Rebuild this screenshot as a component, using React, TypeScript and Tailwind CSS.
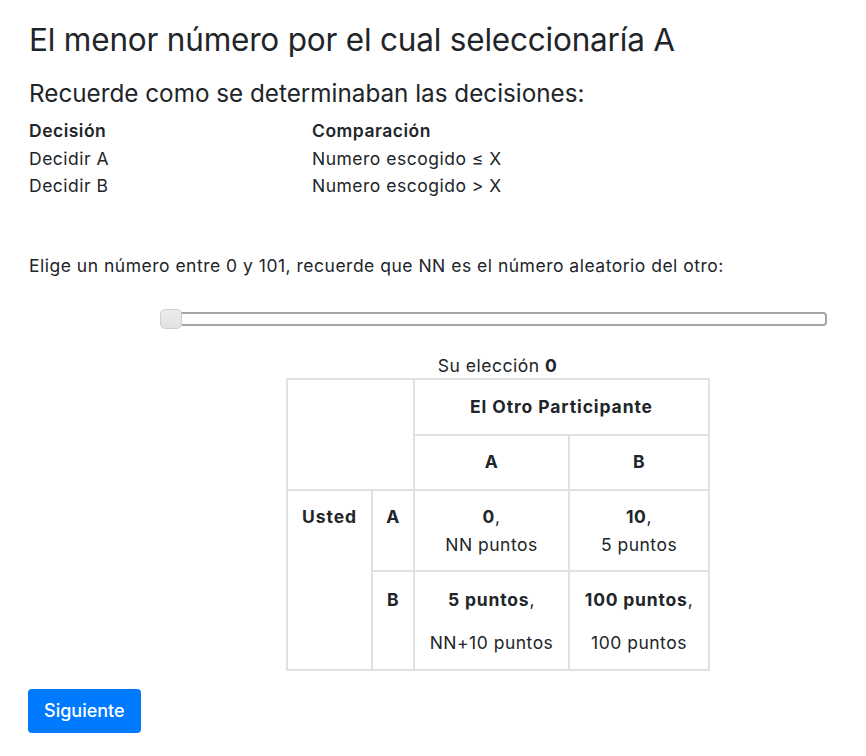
export default function App() {
  const font = { fontFamily: 'Inter, "Noto Sans", sans-serif' }
  return (
    <div className="min-h-screen bg-white text-[#212529]" style={font}>
      <div className="px-[29px] pt-[19px]">
        <h1 className="text-[31.5px] leading-[42px] font-normal tracking-[-0.2px]">
          El menor número por el cual seleccionaría A
        </h1>
        <h3 className="mt-[18px] text-[24.25px] leading-[30px] font-normal">
          Recuerde como se determinaban las decisiones:
        </h3>

        {/* decisiones */}
        <div className="mt-[8px] grid grid-cols-[283px_1fr] text-[17.5px] leading-[27.5px] tracking-[0.5px]">
          <div className="font-semibold">Decisión</div>
          <div className="font-semibold">Comparación</div>
          <div>Decidir A</div>
          <div>Numero escogido ≤ X</div>
          <div>Decidir B</div>
          <div>Numero escogido &gt; X</div>
        </div>

        <p className="mt-[54px] text-[17.5px] leading-[24px] tracking-[0.5px]">
          Elige un número entre 0 y 101, recuerde que NN es el número aleatorio del otro:
        </p>

        {/* slider */}
        <div className="mt-[31px] ml-[131px] mr-[10px] relative h-[20px] flex items-center">
          <div className="w-full h-[14px] rounded-[4px] border-2 border-[#a5a5a5] bg-white" />
          <div className="absolute left-0 top-0 w-[22px] h-[20px] rounded-[5px] border border-[#cfcfcf] bg-gradient-to-b from-[#ececec] to-[#e2e2e2]" />
        </div>

        {/* matriz */}
        <div className="mt-[25px] ml-[257px] text-[17.5px] tracking-[0.5px]">
          <div className="w-[423px] text-center leading-[24px]">
            Su elección <b>0</b>
          </div>
          <table className="border-collapse leading-[26px] text-center">
            <tbody>
              <tr className="h-[56px]">
                <td colSpan={2} rowSpan={2} className="border-2 border-[#dee2e6] w-[127px]"></td>
                <th colSpan={2} className="border-2 border-[#dee2e6] font-bold align-middle tracking-[0.9px]">
                  El Otro Participante
                </th>
              </tr>
              <tr className="h-[55px]">
                <th className="border-2 border-[#dee2e6] w-[155px] font-bold align-middle">A</th>
                <th className="border-2 border-[#dee2e6] w-[140px] font-bold align-middle">B</th>
              </tr>
              <tr className="h-[81px]">
                <th rowSpan={2} className="border-2 border-[#dee2e6] w-[85px] align-top pt-[13px] font-bold tracking-[0.9px]">
                  Usted
                </th>
                <th className="border-2 border-[#dee2e6] w-[42px] align-top pt-[13px] font-bold">A</th>
                <td className="border-2 border-[#dee2e6] align-top pt-[12px] leading-[28px]">
                  <b>0</b>,
                  <br />
                  NN puntos
                </td>
                <td className="border-2 border-[#dee2e6] align-top pt-[12px] leading-[28px]">
                  <b>10</b>,
                  <br />
                  5 puntos
                </td>
              </tr>
              <tr className="h-[99px]">
                <th className="border-2 border-[#dee2e6] align-top pt-[15px] font-bold">B</th>
                <td className="border-2 border-[#dee2e6] align-top pt-[15px]">
                  <b className="tracking-[0.8px]">5 puntos</b>,
                  <div className="mt-[17px]">NN+10 puntos</div>
                </td>
                <td className="border-2 border-[#dee2e6] align-top pt-[15px]">
                  <b className="tracking-[0.8px]">100 puntos</b>,
                  <div className="mt-[17px]">100 puntos</div>
                </td>
              </tr>
            </tbody>
          </table>
        </div>

        <button className="mt-[18px] -ml-px h-[44px] px-[16px] rounded-[4px] bg-[#007bff] text-white text-[18px] font-medium">
          Siguiente
        </button>
      </div>
    </div>
  )
}
